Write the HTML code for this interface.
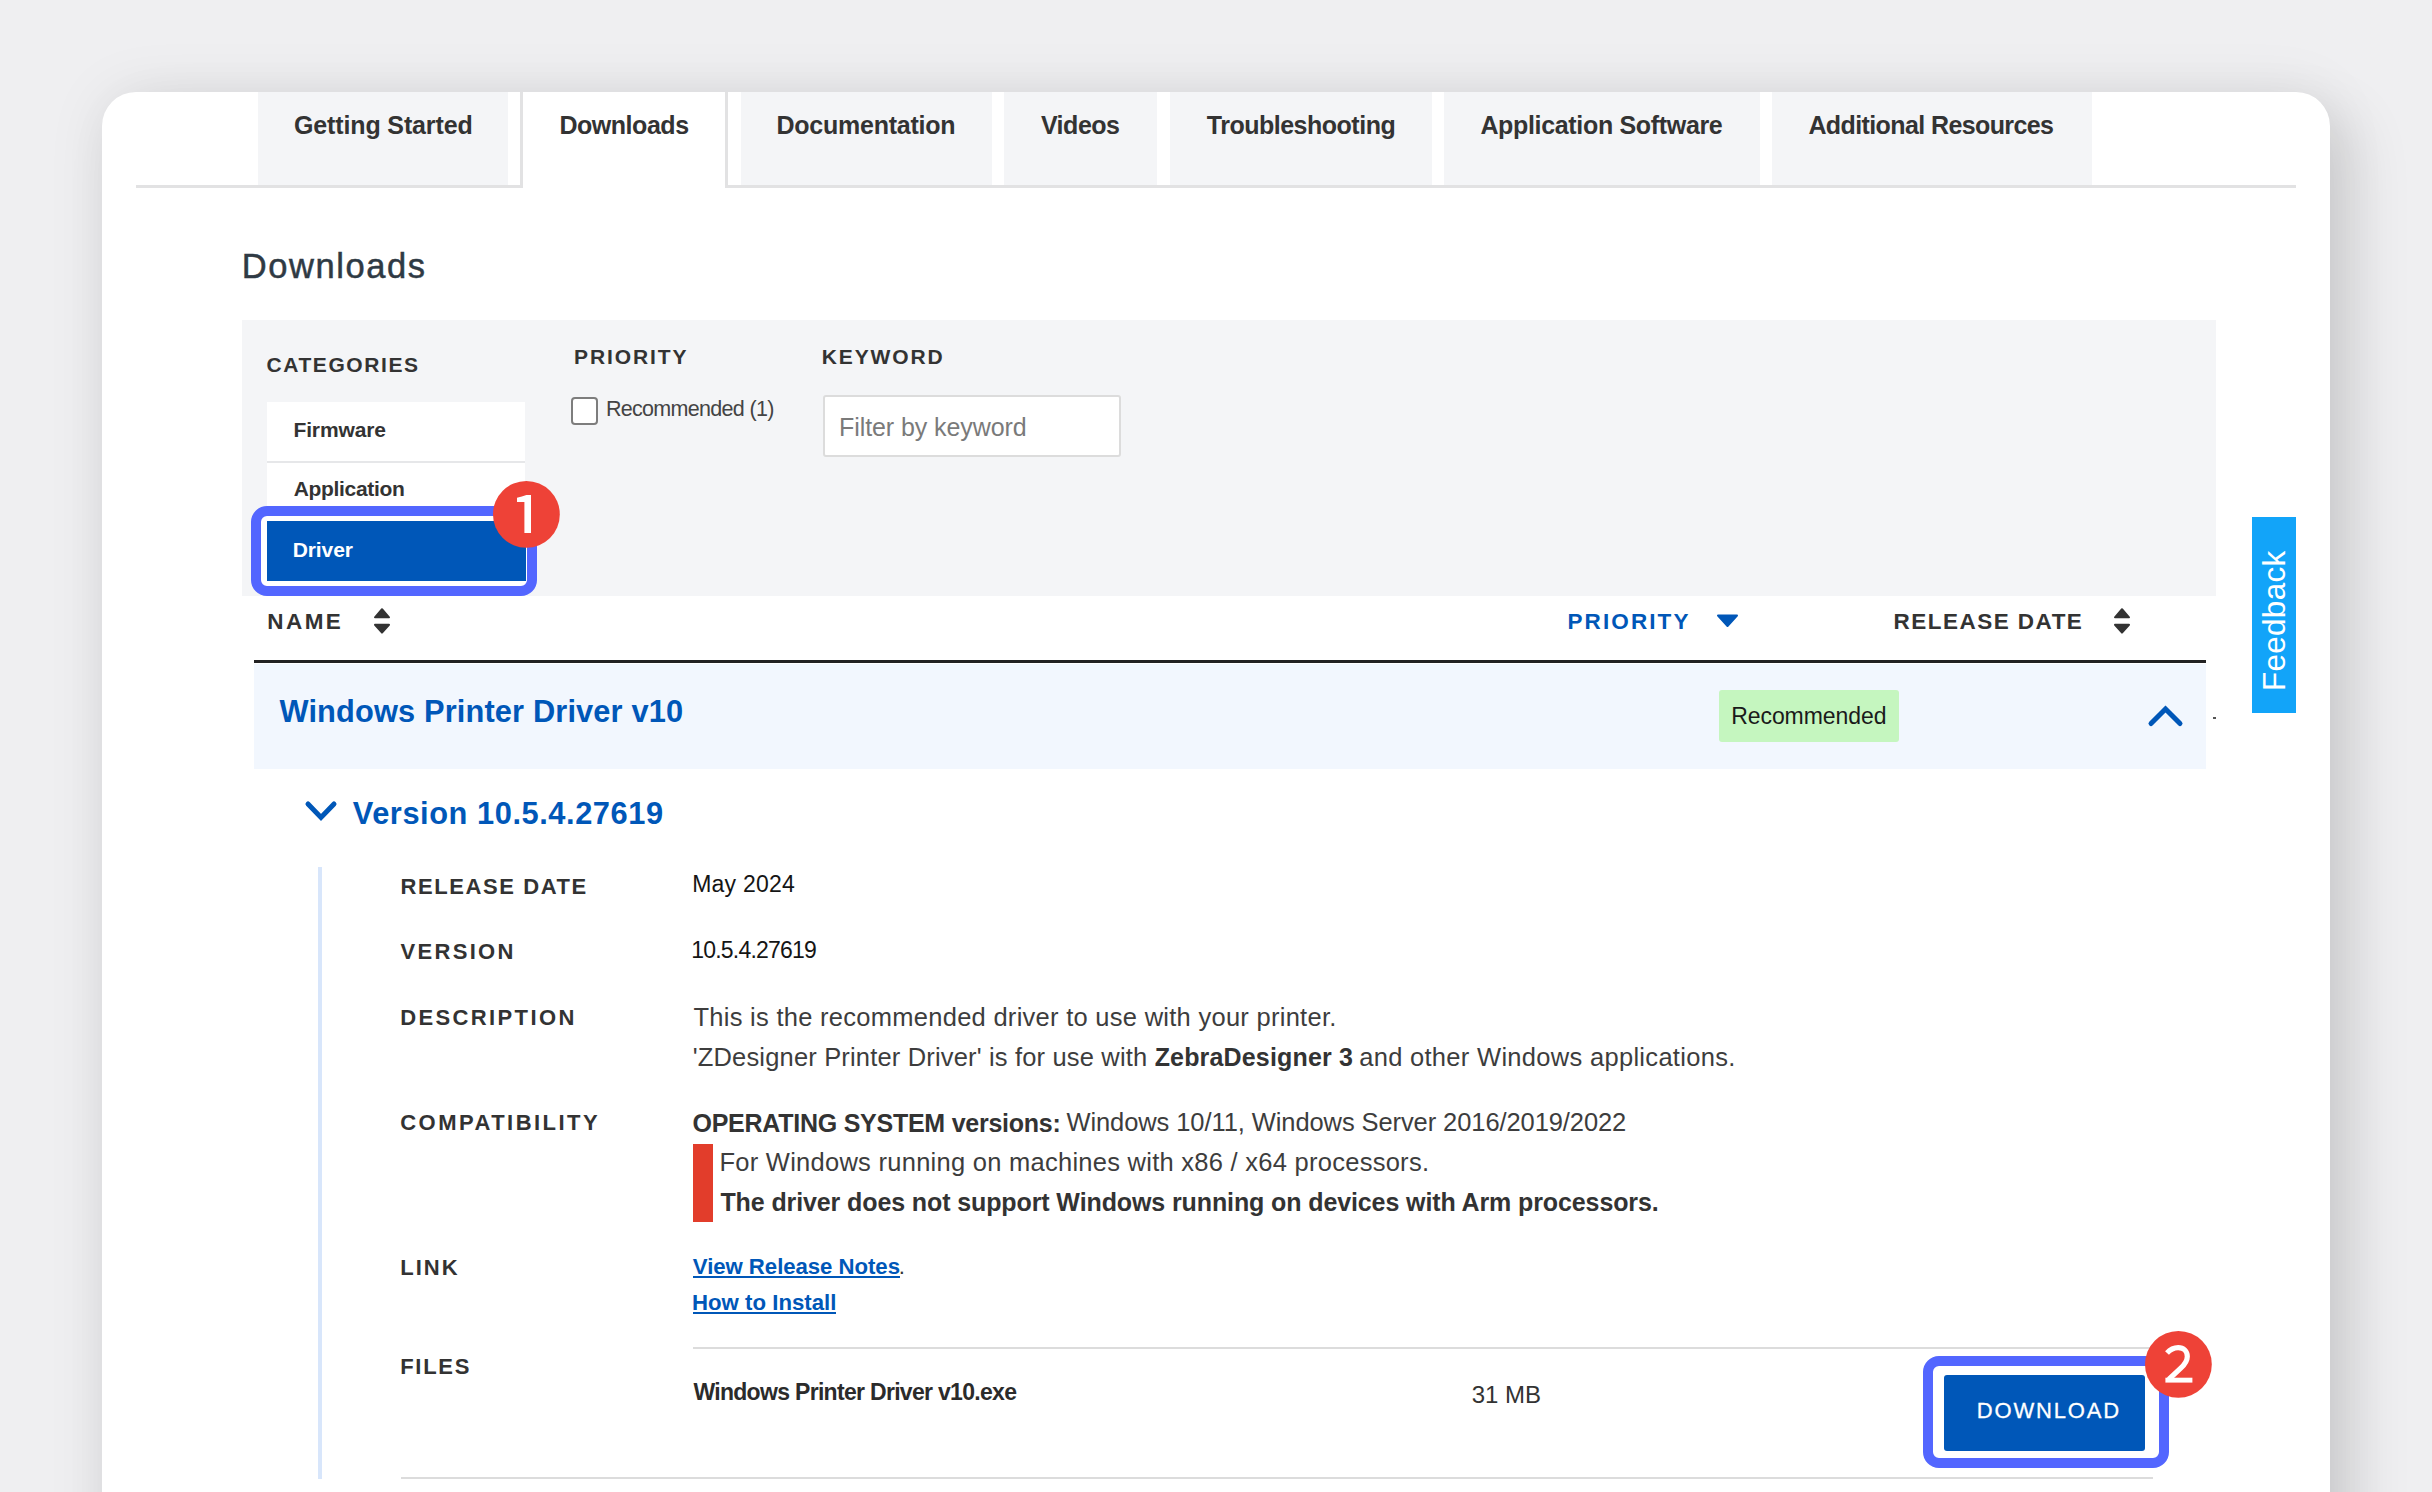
<!DOCTYPE html>
<html><head><meta charset="utf-8">
<style>
html,body{margin:0;padding:0;}
body{width:2432px;height:1492px;overflow:hidden;background:#efeff1;position:relative;font-family:"Liberation Sans",sans-serif;}
.a{position:absolute;}
.t{position:absolute;white-space:nowrap;line-height:1;font-family:"Liberation Sans",sans-serif;}
.t b{font-weight:700;}
.card{position:absolute;left:102px;top:92px;width:2228px;height:1500px;background:#fff;border-radius:34px 34px 0 0;box-shadow:0 0 60px rgba(0,0,0,0.08), 24px 24px 60px rgba(0,0,0,0.12);overflow:hidden;}
.tab{position:absolute;top:92px;height:94px;background:#f4f5f7;}
</style></head><body>
<div class="card"></div>
<!-- tabs -->
<div class="tab" style="left:258px;width:250px;"></div>
<div class="tab" style="left:741px;width:251px;"></div>
<div class="tab" style="left:1004px;width:153px;"></div>
<div class="tab" style="left:1170px;width:262px;"></div>
<div class="tab" style="left:1444px;width:316px;"></div>
<div class="tab" style="left:1772px;width:320px;"></div>
<div class="a" style="left:136px;top:185px;width:387px;height:3px;background:#e2e2e3;"></div>
<div class="a" style="left:725px;top:185px;width:1571px;height:3px;background:#e2e2e3;"></div>
<div class="a" style="left:520px;top:92px;width:3px;height:96px;background:#e2e2e3;"></div>
<div class="a" style="left:725px;top:92px;width:3px;height:96px;background:#e2e2e3;"></div>
<!-- filter panel -->
<div class="a" style="left:242px;top:320px;width:1974px;height:276px;background:#f4f5f7;"></div>
<div class="a" style="left:267px;top:402px;width:258px;height:59px;background:#fff;"></div>
<div class="a" style="left:267px;top:461px;width:258px;height:2px;background:#e6e7e9;"></div>
<div class="a" style="left:267px;top:463px;width:258px;height:58px;background:#fff;"></div>
<div class="a" style="left:571px;top:397px;width:23px;height:24px;border:2px solid #7d7d7d;border-radius:4px;background:#fff;"></div>
<div class="a" style="left:823px;top:395px;width:294px;height:58px;border:2px solid #dcdcdc;border-radius:3px;background:#fff;"></div>
<!-- annotation 1 -->
<div class="a" style="left:251px;top:506px;width:266px;height:70px;border:10px solid #5366ff;border-radius:16px;background:#fff;"></div>
<div class="a" style="left:267px;top:521px;width:259px;height:60px;background:#0057b8;"></div>
<!-- table header -->
<svg class="a" style="left:372px;top:607px;" width="20" height="28" viewBox="0 0 20 28"><path d="M3 10.3 L10 2.2 L17 10.3 Z M3 17.8 L10 25.6 L17 17.8 Z" fill="#333" stroke="#333" stroke-width="2" stroke-linejoin="round"/></svg>
<svg class="a" style="left:1716px;top:613px;" width="24" height="16" viewBox="0 0 24 16"><path d="M2 2.5 L21 2.5 L11.5 13 Z" fill="#0057b8" stroke="#0057b8" stroke-width="2" stroke-linejoin="round"/></svg>
<svg class="a" style="left:2112px;top:607px;" width="20" height="28" viewBox="0 0 20 28"><path d="M3 10.3 L10 2.2 L17 10.3 Z M3 17.8 L10 25.6 L17 17.8 Z" fill="#333" stroke="#333" stroke-width="2" stroke-linejoin="round"/></svg>
<div class="a" style="left:254px;top:660px;width:1952px;height:3px;background:#222;"></div>
<div class="a" style="left:254px;top:664px;width:1952px;height:104.6px;background:#f2f7fe;"></div>
<div class="a" style="left:1719px;top:690px;width:180px;height:52px;background:#c5f6bf;border-radius:3px;"></div>
<svg class="a" style="left:2144px;top:700px;" width="42" height="30" viewBox="0 0 42 30"><path d="M7 23.5 L21.5 9 L36 23.5" fill="none" stroke="#0057b8" stroke-width="5" stroke-linecap="round" stroke-linejoin="miter"/></svg>
<div class="a" style="left:2213px;top:717px;width:3px;height:2px;background:#555;"></div>
<!-- feedback -->
<div class="a" style="left:2252px;top:517px;width:44px;height:196px;background:#12a4f9;"></div>
<!-- version chevron -->
<svg class="a" style="left:302px;top:796px;" width="40" height="30" viewBox="0 0 40 30"><path d="M6 8 L19 21.5 L32 8" fill="none" stroke="#0057b8" stroke-width="5" stroke-linecap="round"/></svg>
<!-- details -->
<div class="a" style="left:318px;top:867px;width:3.5px;height:612px;background:#d8e6fb;"></div>
<div class="a" style="left:693px;top:1144px;width:20px;height:78px;background:#e23d2b;"></div>
<div class="a" style="left:693px;top:1347px;width:1460px;height:2px;background:#dcdcdc;"></div>
<div class="a" style="left:401px;top:1477px;width:1752px;height:2px;background:#dcdcdc;"></div>
<!-- annotation 2 -->
<div class="a" style="left:1923px;top:1356px;width:226px;height:92px;border:10px solid #5366ff;border-radius:16px;background:#fff;"></div>
<div class="a" style="left:1944px;top:1375px;width:201px;height:76px;background:#0057b8;border-radius:3px;"></div>
<div class="a" style="left:693px;top:1276.2px;width:207px;height:1.8px;background:#0057b8;"></div>
<div class="a" style="left:693px;top:1312px;width:143px;height:1.8px;background:#0057b8;"></div>
<div class="t" style="left:294.00px;top:112.54px;font-size:25px;font-weight:700;letter-spacing:-0.134px;color:#333333;">Getting Started</div>
<div class="t" style="left:559.38px;top:112.84px;font-size:25px;font-weight:700;letter-spacing:-0.453px;color:#333333;">Downloads</div>
<div class="t" style="left:776.38px;top:112.84px;font-size:25px;font-weight:700;letter-spacing:-0.229px;color:#333333;">Documentation</div>
<div class="t" style="left:1040.88px;top:112.84px;font-size:25px;font-weight:700;letter-spacing:-0.475px;color:#333333;">Videos</div>
<div class="t" style="left:1206.75px;top:112.84px;font-size:25px;font-weight:700;letter-spacing:-0.491px;color:#333333;">Troubleshooting</div>
<div class="t" style="left:1480.38px;top:112.84px;font-size:25px;font-weight:700;letter-spacing:-0.329px;color:#333333;">Application Software</div>
<div class="t" style="left:1808.38px;top:112.84px;font-size:25px;font-weight:700;letter-spacing:-0.599px;color:#333333;">Additional Resources</div>
<div class="t" style="left:241.74px;top:248.80px;font-size:34.5px;font-weight:400;letter-spacing:1.571px;color:#2f3a44;-webkit-text-stroke:0.5px #2f3a44;">Downloads</div>
<div class="t" style="left:266.56px;top:353.52px;font-size:21px;font-weight:700;letter-spacing:1.571px;color:#333333;">CATEGORIES</div>
<div class="t" style="left:574.03px;top:345.52px;font-size:21px;font-weight:700;letter-spacing:1.894px;color:#333333;">PRIORITY</div>
<div class="t" style="left:821.84px;top:345.52px;font-size:21px;font-weight:700;letter-spacing:1.864px;color:#333333;">KEYWORD</div>
<div class="t" style="left:605.88px;top:399.30px;font-size:21.5px;font-weight:400;letter-spacing:-0.686px;color:#444;">Recommended (1)</div>
<div class="t" style="left:839.00px;top:414.84px;font-size:25px;font-weight:400;letter-spacing:-0.078px;color:#7a7a7a;">Filter by keyword</div>
<div class="t" style="left:293.44px;top:419.12px;font-size:21px;font-weight:700;letter-spacing:-0.121px;color:#333333;">Firmware</div>
<div class="t" style="left:293.68px;top:478.32px;font-size:21px;font-weight:700;letter-spacing:-0.316px;color:#333333;">Application</div>
<div class="t" style="left:292.63px;top:539.22px;font-size:21px;font-weight:700;letter-spacing:-0.062px;color:#ffffff;">Driver</div>
<div class="t" style="left:267.34px;top:610.85px;font-size:22.5px;font-weight:700;letter-spacing:2.400px;color:#333333;">NAME</div>
<div class="t" style="left:1567.54px;top:610.85px;font-size:22.5px;font-weight:700;letter-spacing:2.086px;color:#0057b8;">PRIORITY</div>
<div class="t" style="left:1893.54px;top:610.85px;font-size:22.5px;font-weight:700;letter-spacing:1.476px;color:#333333;">RELEASE DATE</div>
<div class="t" style="left:279.50px;top:696.73px;font-size:30.8px;font-weight:700;letter-spacing:0.135px;color:#0057b8;">Windows Printer Driver v10</div>
<div class="t" style="left:352.75px;top:798.63px;font-size:30.8px;font-weight:700;letter-spacing:0.560px;color:#0057b8;">Version 10.5.4.27619</div>
<div class="t" style="left:1731.16px;top:704.53px;font-size:23px;font-weight:400;letter-spacing:-0.060px;color:#1a1a1a;">Recommended</div>
<div class="t" style="left:400.47px;top:875.58px;font-size:22px;font-weight:700;letter-spacing:1.592px;color:#333333;">RELEASE DATE</div>
<div class="t" style="left:692.16px;top:873.33px;font-size:23px;font-weight:400;letter-spacing:0.235px;color:#151515;">May 2024</div>
<div class="t" style="left:400.49px;top:941.38px;font-size:22px;font-weight:700;letter-spacing:2.323px;color:#333333;">VERSION</div>
<div class="t" style="left:691.27px;top:939.33px;font-size:23px;font-weight:400;letter-spacing:-0.805px;color:#151515;">10.5.4.27619</div>
<div class="t" style="left:400.17px;top:1007.18px;font-size:22px;font-weight:700;letter-spacing:2.380px;color:#333333;">DESCRIPTION</div>
<div class="t" style="left:693.49px;top:1005.21px;font-size:25.5px;font-weight:400;letter-spacing:0.273px;color:#3d3d3d;">This is the recommended driver to use with your printer.</div>
<div class="t" style="left:692.73px;top:1044.51px;font-size:25.5px;font-weight:400;letter-spacing:0.168px;color:#3d3d3d;">'ZDesigner Printer Driver' is for use with</div>
<div class="t" style="left:1154.65px;top:1044.94px;font-size:25px;font-weight:700;letter-spacing:0.168px;color:#333;">ZebraDesigner 3</div>
<div class="t" style="left:1359.18px;top:1044.51px;font-size:25.5px;font-weight:400;letter-spacing:0.301px;color:#3d3d3d;">and other Windows applications.</div>
<div class="t" style="left:400.22px;top:1112.28px;font-size:22px;font-weight:700;letter-spacing:2.463px;color:#333333;">COMPATIBILITY</div>
<div class="t" style="left:692.50px;top:1110.84px;font-size:25px;font-weight:700;letter-spacing:-0.254px;color:#333;">OPERATING SYSTEM versions:</div>
<div class="t" style="left:1066.47px;top:1110.41px;font-size:25.5px;font-weight:400;letter-spacing:-0.090px;color:#3d3d3d;">Windows 10/11, Windows Server 2016/2019/2022</div>
<div class="t" style="left:719.46px;top:1149.61px;font-size:25.5px;font-weight:400;letter-spacing:0.264px;color:#3d3d3d;">For Windows running on machines with x86 / x64 processors.</div>
<div class="t" style="left:720.45px;top:1189.84px;font-size:25px;font-weight:700;letter-spacing:-0.107px;color:#333;">The driver does not support Windows running on devices with Arm processors.</div>
<div class="t" style="left:400.17px;top:1257.18px;font-size:22px;font-weight:700;letter-spacing:2.063px;color:#333333;">LINK</div>
<div class="t" style="left:692.79px;top:1256.41px;font-size:22.2px;font-weight:700;letter-spacing:-0.049px;color:#0057b8;">View Release Notes</div>
<div class="t" style="left:898.70px;top:1256.41px;font-size:22.2px;font-weight:400;letter-spacing:0.000px;color:#333;">.</div>
<div class="t" style="left:691.96px;top:1292.41px;font-size:22.2px;font-weight:700;letter-spacing:0.023px;color:#0057b8;">How to Install</div>
<div class="t" style="left:400.17px;top:1356.18px;font-size:22px;font-weight:700;letter-spacing:1.735px;color:#333333;">FILES</div>
<div class="t" style="left:693.40px;top:1381.43px;font-size:23px;font-weight:700;letter-spacing:-0.691px;color:#2b2b2b;">Windows Printer Driver v10.exe</div>
<div class="t" style="left:1471.64px;top:1382.68px;font-size:24px;font-weight:400;letter-spacing:-0.025px;color:#333;">31 MB</div>
<div class="t" style="left:1976.74px;top:1400.08px;font-size:22px;font-weight:400;letter-spacing:1.826px;color:#ffffff;-webkit-text-stroke:0.3px #fff;">DOWNLOAD</div>
<div class="t" style="left:2259.34px;top:690.82px;font-size:31.5px;letter-spacing:0.262px;color:#fff;transform-origin:0 0;transform:rotate(-90deg);">Feedback</div>
<!-- badges -->
<svg class="a" style="left:492.8px;top:481.1px;" width="67" height="67" viewBox="0 0 67 67"><circle cx="33.4" cy="33.4" r="33.4" fill="#ee4237"/><path d="M24 16.8 Q29 15.6 33.4 14 L38 14 L38 52 L31.4 52 L31.4 21.1 L24 21.1 Z" fill="#fff"/></svg>
<svg class="a" style="left:2144.8px;top:1331.1px;" width="67" height="67" viewBox="0 0 67 67"><circle cx="33.4" cy="33.4" r="33.4" fill="#ee4237"/><path d="M22 22 C25.3 18.3 29 16.6 33.2 16.6 C38.6 16.6 42.3 20.3 42.3 25.4 C42.3 30.3 39.6 33.6 35.5 37.4 L24.8 47.4 L24.8 49.1" fill="none" stroke="#fff" stroke-width="5.2" stroke-linejoin="miter"/><path d="M20.4 46.7 L47.4 46.7 L47.4 51.6 L20.4 51.6 Z" fill="#fff"/></svg>
</body></html>
